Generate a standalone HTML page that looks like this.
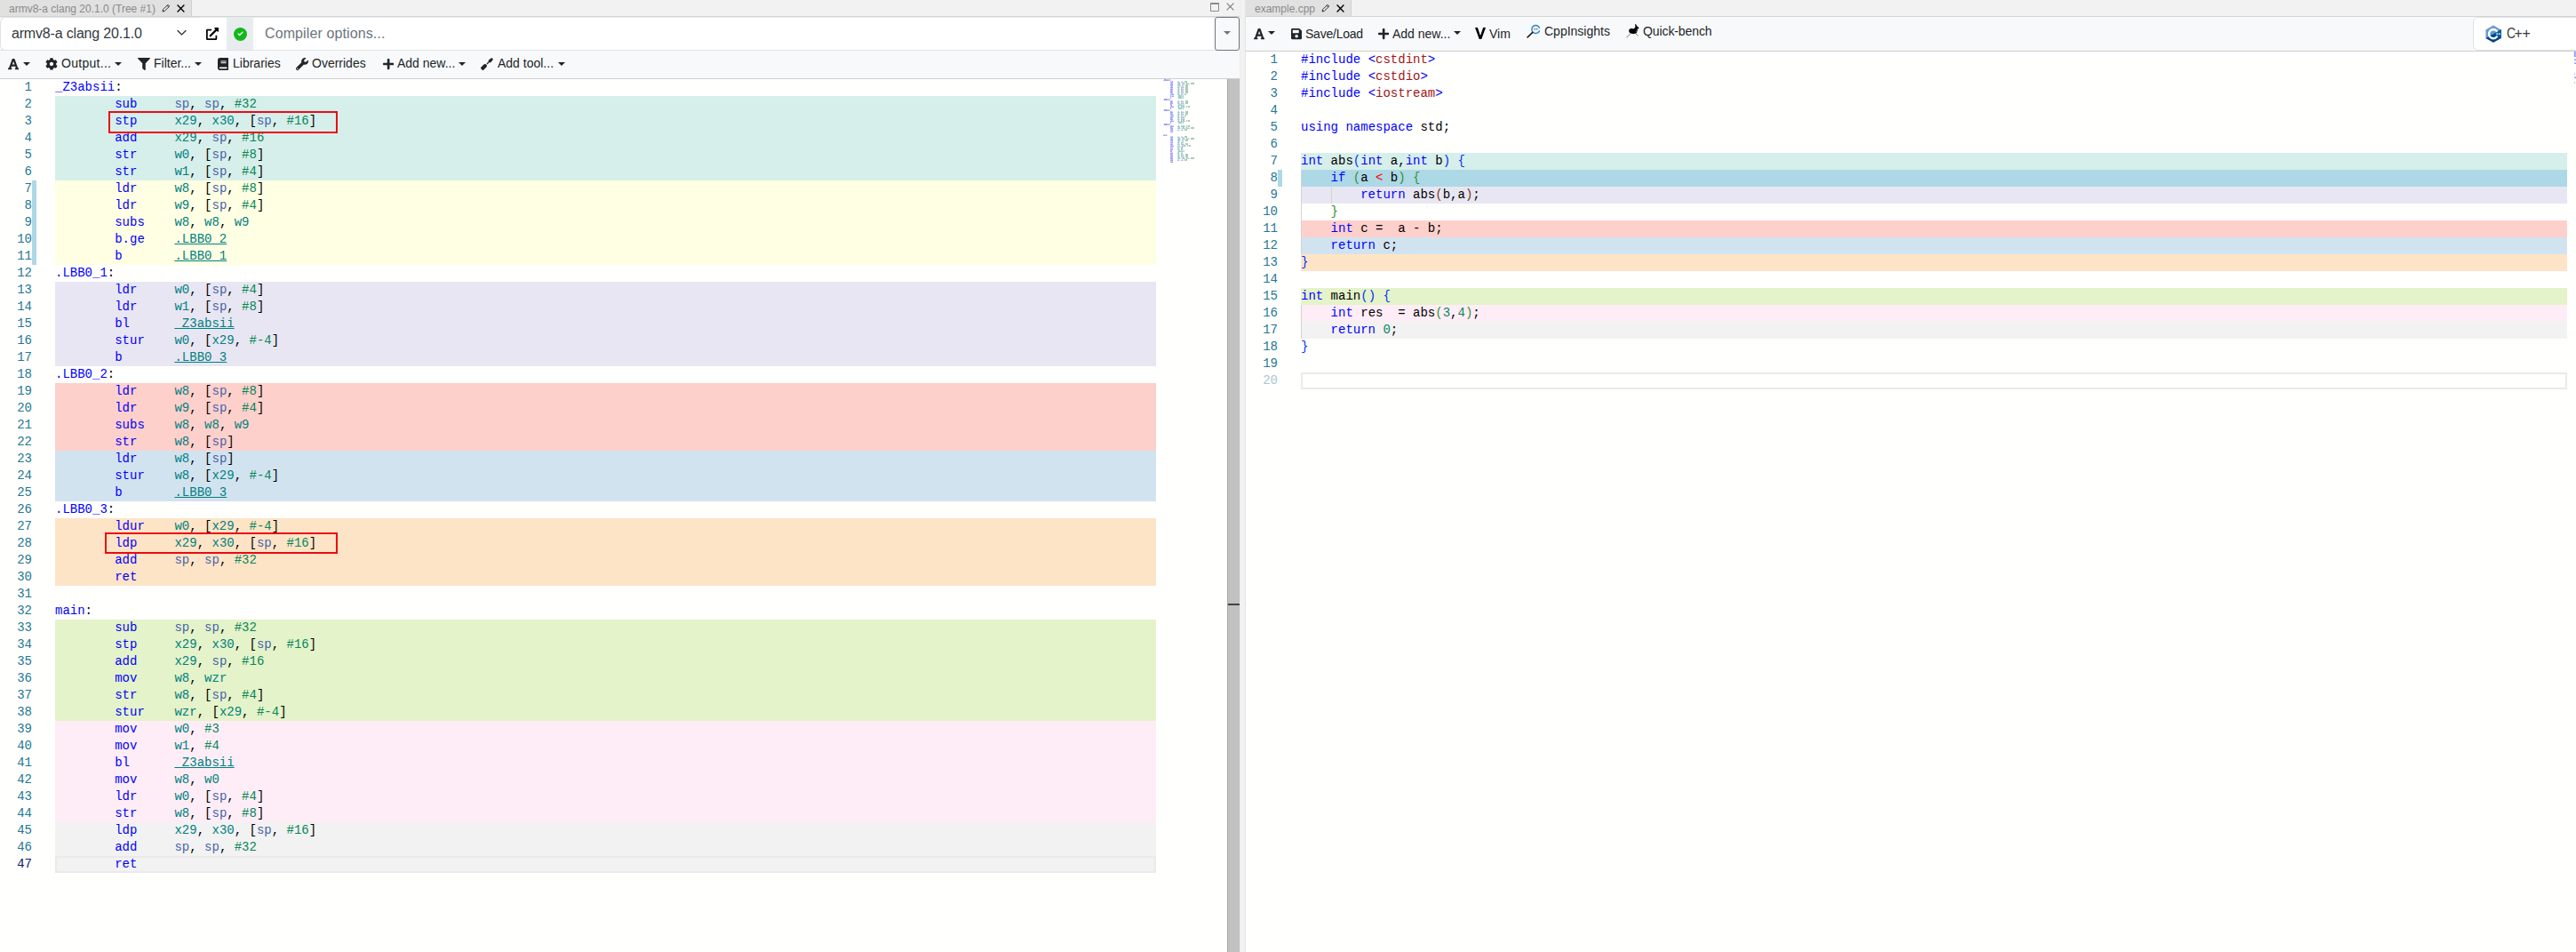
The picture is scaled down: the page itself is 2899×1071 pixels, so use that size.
<!DOCTYPE html>
<html><head><meta charset="utf-8"><title>Compiler Explorer</title>
<style>
*{box-sizing:border-box;margin:0;padding:0}
html,body{width:2899px;height:1071px;overflow:hidden;background:#fffffe}
body{position:relative;font-family:"Liberation Sans",sans-serif;color:#212529}
.abs{position:absolute}
.bg{position:absolute;height:19px}
.ln{position:absolute;height:19px;line-height:19px;font:14px/19px "Liberation Mono",monospace;color:#237893;text-align:right;white-space:pre}
.ln.act{color:#0b216f}
.ln.dim{color:#a7c8d3}
.cl{position:absolute;height:19px;font:14px/19px "Liberation Mono",monospace;color:#000;white-space:pre}
.k{color:#0000ff}.p{color:#000}.n{color:#098658}.v{color:#4864aa}.r{color:#008080}
.l{color:#008080;text-decoration:underline}
.s{color:#a31515}.b1{color:#0431fa}.b2{color:#319331}.b3{color:#7b3814}.red{color:#ff0000}
.cur{position:absolute;height:19px;border:2px solid #eaeaea}
.hdr{position:absolute;top:0;height:19px;background:#f2f2f2;border-bottom:1px solid #d4d4d4}
.tab{position:absolute;top:0;height:18px;background:#e1e1e1;border-right:1px solid #d0d0d0;font-size:12px;line-height:18px;color:#8a8a8a;white-space:nowrap}
.tb{position:absolute;background:#f8f9fa}
.t14{position:absolute;font-size:14px;line-height:20px;color:#212529;white-space:nowrap}
.caret{position:absolute;width:0;height:0;border-left:4px solid transparent;border-right:4px solid transparent;border-top:4px solid #212529}
svg{display:block}
</style></head><body>
<!-- ===== left pane chrome ===== -->
<div class="hdr" style="left:0;width:1395px"></div>
<div class="tab" style="left:0;width:216px"><span class="abs" style="left:10px;top:1px">armv8-a clang 20.1.0 (Tree #1)</span></div>
<!-- compiler row -->
<div class="abs" style="left:0;top:19px;width:1395px;height:38px;background:#fff;border-top:1px solid #e8ebee;border-bottom:1px solid #dee2e6"></div>
<div class="abs" style="left:0;top:19px;width:225px;height:38px;background:#fff;border:1px solid #dee2e6;border-right:0;border-radius:6px 0 0 6px"></div>
<div class="abs" style="left:13px;top:26px;font-size:16px;line-height:24px;color:#343a40;white-space:nowrap;letter-spacing:-0.18px">armv8-a clang 20.1.0</div>
<div class="abs" style="left:255px;top:20px;width:30px;height:36px;background:#e9ecef"></div>
<div class="abs" style="left:263px;top:30.5px;width:15px;height:15px;border-radius:50%;background:#12b81b"></div>
<div class="abs" style="left:298px;top:26px;font-size:16px;line-height:24px;color:#6c757d;white-space:nowrap;letter-spacing:0.11px">Compiler options...</div>
<div class="abs" style="left:1367px;top:19px;width:28px;height:38px;border:1px solid #6c757d;border-radius:3px;background:#f8f9fa"></div>
<div class="caret" style="left:1377px;top:35px;border-top-color:#6c757d"></div>
<!-- toolbar -->
<div class="tb" style="left:0;top:57px;width:1395px;height:32px;border-bottom:1px solid #cfcfcf"></div>
<div class="t14" style="left:69px;top:61px;letter-spacing:0.28px">Output...</div>
<div class="t14" style="left:173px;top:61px">Filter...</div>
<div class="t14" style="left:262px;top:61px">Libraries</div>
<div class="t14" style="left:351px;top:61px">Overrides</div>
<div class="t14" style="left:447px;top:61px">Add new...</div>
<div class="t14" style="left:560px;top:61px">Add tool...</div>
<!-- scrollbar -->
<div class="abs" style="left:1381px;top:89px;width:14px;height:982px;background:#c1c1c1;border-left:1px solid #a8a8a8"></div>
<div class="abs" style="left:1382px;top:679px;width:13px;height:2px;background:#424242"></div>
<!-- splitter -->
<div class="abs" style="left:1395px;top:0;width:7px;height:1071px;background:#f2f2f2;border-left:1px solid #ececec;border-right:1px solid #e4e4e4"></div>

<!-- ===== right pane chrome ===== -->
<div class="hdr" style="left:1402px;width:1497px"></div>
<div class="tab" style="left:1402px;width:119px"><span class="abs" style="left:10px;top:1px">example.cpp</span></div>
<div class="tb" style="left:1402px;top:19px;width:1497px;height:39px;border-bottom:1px solid #cfcfcf"></div>
<div class="t14" style="left:1469px;top:28px;letter-spacing:-0.23px">Save/Load</div>
<div class="t14" style="left:1567px;top:28px">Add new...</div>
<div class="t14" style="left:1676px;top:28px">Vim</div>
<div class="t14" style="left:1738px;top:25px">CppInsights</div>
<div class="t14" style="left:1849px;top:25px;letter-spacing:-0.1px">Quick-bench</div>
<div class="abs" style="left:2783px;top:19px;width:130px;height:38px;background:#fff;border:1px solid #dee2e6;border-radius:6px"></div>
<div class="abs" style="left:2820.6px;top:26px;font-size:16px;line-height:24px;color:#343a40;transform:scaleX(0.87);transform-origin:0 0">C</div><div class="abs" style="left:2829.4px;top:26px;font-size:16px;line-height:24px;color:#343a40;letter-spacing:-0.29px">++</div>
<div class="bg" style="left:62px;top:108px;width:1239px;background:#d7efea"></div>
<div class="bg" style="left:62px;top:127px;width:1239px;background:#d7efea"></div>
<div class="bg" style="left:62px;top:146px;width:1239px;background:#d7efea"></div>
<div class="bg" style="left:62px;top:165px;width:1239px;background:#d7efea"></div>
<div class="bg" style="left:62px;top:184px;width:1239px;background:#d7efea"></div>
<div class="bg" style="left:62px;top:203px;width:1239px;background:#ffffe3"></div>
<div class="bg" style="left:62px;top:222px;width:1239px;background:#ffffe3"></div>
<div class="bg" style="left:62px;top:241px;width:1239px;background:#ffffe3"></div>
<div class="bg" style="left:62px;top:260px;width:1239px;background:#ffffe3"></div>
<div class="bg" style="left:62px;top:279px;width:1239px;background:#ffffe3"></div>
<div class="bg" style="left:62px;top:317px;width:1239px;background:#e8e6f2"></div>
<div class="bg" style="left:62px;top:336px;width:1239px;background:#e8e6f2"></div>
<div class="bg" style="left:62px;top:355px;width:1239px;background:#e8e6f2"></div>
<div class="bg" style="left:62px;top:374px;width:1239px;background:#e8e6f2"></div>
<div class="bg" style="left:62px;top:393px;width:1239px;background:#e8e6f2"></div>
<div class="bg" style="left:62px;top:431px;width:1239px;background:#fed0cc"></div>
<div class="bg" style="left:62px;top:450px;width:1239px;background:#fed0cc"></div>
<div class="bg" style="left:62px;top:469px;width:1239px;background:#fed0cc"></div>
<div class="bg" style="left:62px;top:488px;width:1239px;background:#fed0cc"></div>
<div class="bg" style="left:62px;top:507px;width:1239px;background:#d2e3f0"></div>
<div class="bg" style="left:62px;top:526px;width:1239px;background:#d2e3f0"></div>
<div class="bg" style="left:62px;top:545px;width:1239px;background:#d2e3f0"></div>
<div class="bg" style="left:62px;top:583px;width:1239px;background:#fee4c7"></div>
<div class="bg" style="left:62px;top:602px;width:1239px;background:#fee4c7"></div>
<div class="bg" style="left:62px;top:621px;width:1239px;background:#fee4c7"></div>
<div class="bg" style="left:62px;top:640px;width:1239px;background:#fee4c7"></div>
<div class="bg" style="left:62px;top:697px;width:1239px;background:#e4f3c9"></div>
<div class="bg" style="left:62px;top:716px;width:1239px;background:#e4f3c9"></div>
<div class="bg" style="left:62px;top:735px;width:1239px;background:#e4f3c9"></div>
<div class="bg" style="left:62px;top:754px;width:1239px;background:#e4f3c9"></div>
<div class="bg" style="left:62px;top:773px;width:1239px;background:#e4f3c9"></div>
<div class="bg" style="left:62px;top:792px;width:1239px;background:#e4f3c9"></div>
<div class="bg" style="left:62px;top:811px;width:1239px;background:#feedf6"></div>
<div class="bg" style="left:62px;top:830px;width:1239px;background:#feedf6"></div>
<div class="bg" style="left:62px;top:849px;width:1239px;background:#feedf6"></div>
<div class="bg" style="left:62px;top:868px;width:1239px;background:#feedf6"></div>
<div class="bg" style="left:62px;top:887px;width:1239px;background:#feedf6"></div>
<div class="bg" style="left:62px;top:906px;width:1239px;background:#feedf6"></div>
<div class="bg" style="left:62px;top:925px;width:1239px;background:#f2f2f2"></div>
<div class="bg" style="left:62px;top:944px;width:1239px;background:#f2f2f2"></div>
<div class="bg" style="left:62px;top:963px;width:1239px;background:#f2f2f2"></div>
<div class="ln" style="left:0;width:36px;top:89px">1</div>
<div class="cl" style="left:62px;top:89px"><span class="k">_Z3absii</span><span class="p">:</span></div>
<div class="ln" style="left:0;width:36px;top:108px">2</div>
<div class="cl" style="left:62px;top:108px">        <span class="k">sub</span>     <span class="v">sp</span><span class="p">,</span> <span class="v">sp</span><span class="p">,</span> <span class="n">#32</span></div>
<div class="ln" style="left:0;width:36px;top:127px">3</div>
<div class="cl" style="left:62px;top:127px">        <span class="k">stp</span>     <span class="r">x29</span><span class="p">,</span> <span class="r">x30</span><span class="p">,</span> <span class="p">[</span><span class="v">sp</span><span class="p">,</span> <span class="n">#16</span><span class="p">]</span></div>
<div class="ln" style="left:0;width:36px;top:146px">4</div>
<div class="cl" style="left:62px;top:146px">        <span class="k">add</span>     <span class="r">x29</span><span class="p">,</span> <span class="v">sp</span><span class="p">,</span> <span class="n">#16</span></div>
<div class="ln" style="left:0;width:36px;top:165px">5</div>
<div class="cl" style="left:62px;top:165px">        <span class="k">str</span>     <span class="r">w0</span><span class="p">,</span> <span class="p">[</span><span class="v">sp</span><span class="p">,</span> <span class="n">#8</span><span class="p">]</span></div>
<div class="ln" style="left:0;width:36px;top:184px">6</div>
<div class="cl" style="left:62px;top:184px">        <span class="k">str</span>     <span class="r">w1</span><span class="p">,</span> <span class="p">[</span><span class="v">sp</span><span class="p">,</span> <span class="n">#4</span><span class="p">]</span></div>
<div class="ln" style="left:0;width:36px;top:203px">7</div>
<div class="cl" style="left:62px;top:203px">        <span class="k">ldr</span>     <span class="r">w8</span><span class="p">,</span> <span class="p">[</span><span class="v">sp</span><span class="p">,</span> <span class="n">#8</span><span class="p">]</span></div>
<div class="ln" style="left:0;width:36px;top:222px">8</div>
<div class="cl" style="left:62px;top:222px">        <span class="k">ldr</span>     <span class="r">w9</span><span class="p">,</span> <span class="p">[</span><span class="v">sp</span><span class="p">,</span> <span class="n">#4</span><span class="p">]</span></div>
<div class="ln" style="left:0;width:36px;top:241px">9</div>
<div class="cl" style="left:62px;top:241px">        <span class="k">subs</span>    <span class="r">w8</span><span class="p">,</span> <span class="r">w8</span><span class="p">,</span> <span class="r">w9</span></div>
<div class="ln" style="left:0;width:36px;top:260px">10</div>
<div class="cl" style="left:62px;top:260px">        <span class="k">b.ge</span>    <span class="l">.LBB0_2</span></div>
<div class="ln" style="left:0;width:36px;top:279px">11</div>
<div class="cl" style="left:62px;top:279px">        <span class="k">b</span>       <span class="l">.LBB0_1</span></div>
<div class="ln" style="left:0;width:36px;top:298px">12</div>
<div class="cl" style="left:62px;top:298px"><span class="k">.LBB0_1</span><span class="p">:</span></div>
<div class="ln" style="left:0;width:36px;top:317px">13</div>
<div class="cl" style="left:62px;top:317px">        <span class="k">ldr</span>     <span class="r">w0</span><span class="p">,</span> <span class="p">[</span><span class="v">sp</span><span class="p">,</span> <span class="n">#4</span><span class="p">]</span></div>
<div class="ln" style="left:0;width:36px;top:336px">14</div>
<div class="cl" style="left:62px;top:336px">        <span class="k">ldr</span>     <span class="r">w1</span><span class="p">,</span> <span class="p">[</span><span class="v">sp</span><span class="p">,</span> <span class="n">#8</span><span class="p">]</span></div>
<div class="ln" style="left:0;width:36px;top:355px">15</div>
<div class="cl" style="left:62px;top:355px">        <span class="k">bl</span>      <span class="l">_Z3absii</span></div>
<div class="ln" style="left:0;width:36px;top:374px">16</div>
<div class="cl" style="left:62px;top:374px">        <span class="k">stur</span>    <span class="r">w0</span><span class="p">,</span> <span class="p">[</span><span class="r">x29</span><span class="p">,</span> <span class="n">#-4</span><span class="p">]</span></div>
<div class="ln" style="left:0;width:36px;top:393px">17</div>
<div class="cl" style="left:62px;top:393px">        <span class="k">b</span>       <span class="l">.LBB0_3</span></div>
<div class="ln" style="left:0;width:36px;top:412px">18</div>
<div class="cl" style="left:62px;top:412px"><span class="k">.LBB0_2</span><span class="p">:</span></div>
<div class="ln" style="left:0;width:36px;top:431px">19</div>
<div class="cl" style="left:62px;top:431px">        <span class="k">ldr</span>     <span class="r">w8</span><span class="p">,</span> <span class="p">[</span><span class="v">sp</span><span class="p">,</span> <span class="n">#8</span><span class="p">]</span></div>
<div class="ln" style="left:0;width:36px;top:450px">20</div>
<div class="cl" style="left:62px;top:450px">        <span class="k">ldr</span>     <span class="r">w9</span><span class="p">,</span> <span class="p">[</span><span class="v">sp</span><span class="p">,</span> <span class="n">#4</span><span class="p">]</span></div>
<div class="ln" style="left:0;width:36px;top:469px">21</div>
<div class="cl" style="left:62px;top:469px">        <span class="k">subs</span>    <span class="r">w8</span><span class="p">,</span> <span class="r">w8</span><span class="p">,</span> <span class="r">w9</span></div>
<div class="ln" style="left:0;width:36px;top:488px">22</div>
<div class="cl" style="left:62px;top:488px">        <span class="k">str</span>     <span class="r">w8</span><span class="p">,</span> <span class="p">[</span><span class="v">sp</span><span class="p">]</span></div>
<div class="ln" style="left:0;width:36px;top:507px">23</div>
<div class="cl" style="left:62px;top:507px">        <span class="k">ldr</span>     <span class="r">w8</span><span class="p">,</span> <span class="p">[</span><span class="v">sp</span><span class="p">]</span></div>
<div class="ln" style="left:0;width:36px;top:526px">24</div>
<div class="cl" style="left:62px;top:526px">        <span class="k">stur</span>    <span class="r">w8</span><span class="p">,</span> <span class="p">[</span><span class="r">x29</span><span class="p">,</span> <span class="n">#-4</span><span class="p">]</span></div>
<div class="ln" style="left:0;width:36px;top:545px">25</div>
<div class="cl" style="left:62px;top:545px">        <span class="k">b</span>       <span class="l">.LBB0_3</span></div>
<div class="ln" style="left:0;width:36px;top:564px">26</div>
<div class="cl" style="left:62px;top:564px"><span class="k">.LBB0_3</span><span class="p">:</span></div>
<div class="ln" style="left:0;width:36px;top:583px">27</div>
<div class="cl" style="left:62px;top:583px">        <span class="k">ldur</span>    <span class="r">w0</span><span class="p">,</span> <span class="p">[</span><span class="r">x29</span><span class="p">,</span> <span class="n">#-4</span><span class="p">]</span></div>
<div class="ln" style="left:0;width:36px;top:602px">28</div>
<div class="cl" style="left:62px;top:602px">        <span class="k">ldp</span>     <span class="r">x29</span><span class="p">,</span> <span class="r">x30</span><span class="p">,</span> <span class="p">[</span><span class="v">sp</span><span class="p">,</span> <span class="n">#16</span><span class="p">]</span></div>
<div class="ln" style="left:0;width:36px;top:621px">29</div>
<div class="cl" style="left:62px;top:621px">        <span class="k">add</span>     <span class="v">sp</span><span class="p">,</span> <span class="v">sp</span><span class="p">,</span> <span class="n">#32</span></div>
<div class="ln" style="left:0;width:36px;top:640px">30</div>
<div class="cl" style="left:62px;top:640px">        <span class="k">ret</span></div>
<div class="ln" style="left:0;width:36px;top:659px">31</div>
<div class="ln" style="left:0;width:36px;top:678px">32</div>
<div class="cl" style="left:62px;top:678px"><span class="k">main</span><span class="p">:</span></div>
<div class="ln" style="left:0;width:36px;top:697px">33</div>
<div class="cl" style="left:62px;top:697px">        <span class="k">sub</span>     <span class="v">sp</span><span class="p">,</span> <span class="v">sp</span><span class="p">,</span> <span class="n">#32</span></div>
<div class="ln" style="left:0;width:36px;top:716px">34</div>
<div class="cl" style="left:62px;top:716px">        <span class="k">stp</span>     <span class="r">x29</span><span class="p">,</span> <span class="r">x30</span><span class="p">,</span> <span class="p">[</span><span class="v">sp</span><span class="p">,</span> <span class="n">#16</span><span class="p">]</span></div>
<div class="ln" style="left:0;width:36px;top:735px">35</div>
<div class="cl" style="left:62px;top:735px">        <span class="k">add</span>     <span class="r">x29</span><span class="p">,</span> <span class="v">sp</span><span class="p">,</span> <span class="n">#16</span></div>
<div class="ln" style="left:0;width:36px;top:754px">36</div>
<div class="cl" style="left:62px;top:754px">        <span class="k">mov</span>     <span class="r">w8</span><span class="p">,</span> <span class="r">wzr</span></div>
<div class="ln" style="left:0;width:36px;top:773px">37</div>
<div class="cl" style="left:62px;top:773px">        <span class="k">str</span>     <span class="r">w8</span><span class="p">,</span> <span class="p">[</span><span class="v">sp</span><span class="p">,</span> <span class="n">#4</span><span class="p">]</span></div>
<div class="ln" style="left:0;width:36px;top:792px">38</div>
<div class="cl" style="left:62px;top:792px">        <span class="k">stur</span>    <span class="r">wzr</span><span class="p">,</span> <span class="p">[</span><span class="r">x29</span><span class="p">,</span> <span class="n">#-4</span><span class="p">]</span></div>
<div class="ln" style="left:0;width:36px;top:811px">39</div>
<div class="cl" style="left:62px;top:811px">        <span class="k">mov</span>     <span class="r">w0</span><span class="p">,</span> <span class="n">#3</span></div>
<div class="ln" style="left:0;width:36px;top:830px">40</div>
<div class="cl" style="left:62px;top:830px">        <span class="k">mov</span>     <span class="r">w1</span><span class="p">,</span> <span class="n">#4</span></div>
<div class="ln" style="left:0;width:36px;top:849px">41</div>
<div class="cl" style="left:62px;top:849px">        <span class="k">bl</span>      <span class="l">_Z3absii</span></div>
<div class="ln" style="left:0;width:36px;top:868px">42</div>
<div class="cl" style="left:62px;top:868px">        <span class="k">mov</span>     <span class="r">w8</span><span class="p">,</span> <span class="r">w0</span></div>
<div class="ln" style="left:0;width:36px;top:887px">43</div>
<div class="cl" style="left:62px;top:887px">        <span class="k">ldr</span>     <span class="r">w0</span><span class="p">,</span> <span class="p">[</span><span class="v">sp</span><span class="p">,</span> <span class="n">#4</span><span class="p">]</span></div>
<div class="ln" style="left:0;width:36px;top:906px">44</div>
<div class="cl" style="left:62px;top:906px">        <span class="k">str</span>     <span class="r">w8</span><span class="p">,</span> <span class="p">[</span><span class="v">sp</span><span class="p">,</span> <span class="n">#8</span><span class="p">]</span></div>
<div class="ln" style="left:0;width:36px;top:925px">45</div>
<div class="cl" style="left:62px;top:925px">        <span class="k">ldp</span>     <span class="r">x29</span><span class="p">,</span> <span class="r">x30</span><span class="p">,</span> <span class="p">[</span><span class="v">sp</span><span class="p">,</span> <span class="n">#16</span><span class="p">]</span></div>
<div class="ln" style="left:0;width:36px;top:944px">46</div>
<div class="cl" style="left:62px;top:944px">        <span class="k">add</span>     <span class="v">sp</span><span class="p">,</span> <span class="v">sp</span><span class="p">,</span> <span class="n">#32</span></div>
<div class="ln act" style="left:0;width:36px;top:963px">47</div>
<div class="cl" style="left:62px;top:963px">        <span class="k">ret</span></div>
<div class="cur" style="left:62px;top:963px;width:1239px"></div>
<div style="position:absolute;left:36px;top:203px;width:5px;height:95px;background:#add8e6"></div>
<div class="bg" style="left:1464px;top:172px;width:1425px;background:#d7efea"></div>
<div class="bg" style="left:1464px;top:191px;width:1425px;background:#add8e6"></div>
<div class="bg" style="left:1464px;top:210px;width:1425px;background:#e8e6f2"></div>
<div class="bg" style="left:1464px;top:248px;width:1425px;background:#fed0cc"></div>
<div class="bg" style="left:1464px;top:267px;width:1425px;background:#d2e3f0"></div>
<div class="bg" style="left:1464px;top:286px;width:1425px;background:#fee4c7"></div>
<div class="bg" style="left:1464px;top:324px;width:1425px;background:#e4f3c9"></div>
<div class="bg" style="left:1464px;top:343px;width:1425px;background:#feedf6"></div>
<div class="bg" style="left:1464px;top:362px;width:1425px;background:#f2f2f2"></div>
<div style="position:absolute;left:1464.0px;top:191px;width:1px;height:95px;background:#d3d3d3"></div>
<div style="position:absolute;left:1497.6px;top:210px;width:1px;height:19px;background:#d3d3d3"></div>
<div style="position:absolute;left:1464.0px;top:343px;width:1px;height:38px;background:#d3d3d3"></div>
<div class="ln" style="left:1402px;width:36px;top:58px">1</div>
<div class="cl" style="left:1464px;top:58px"><span class="k">#include </span><span class="k">&lt;</span><span class="s">cstdint</span><span class="k">&gt;</span></div>
<div class="ln" style="left:1402px;width:36px;top:77px">2</div>
<div class="cl" style="left:1464px;top:77px"><span class="k">#include </span><span class="k">&lt;</span><span class="s">cstdio</span><span class="k">&gt;</span></div>
<div class="ln" style="left:1402px;width:36px;top:96px">3</div>
<div class="cl" style="left:1464px;top:96px"><span class="k">#include </span><span class="k">&lt;</span><span class="s">iostream</span><span class="k">&gt;</span></div>
<div class="ln" style="left:1402px;width:36px;top:115px">4</div>
<div class="ln" style="left:1402px;width:36px;top:134px">5</div>
<div class="cl" style="left:1464px;top:134px"><span class="k">using</span> <span class="k">namespace</span><span class="p"> std;</span></div>
<div class="ln" style="left:1402px;width:36px;top:153px">6</div>
<div class="ln" style="left:1402px;width:36px;top:172px">7</div>
<div class="cl" style="left:1464px;top:172px"><span class="k">int</span><span class="p"> abs</span><span class="b1">(</span><span class="k">int</span><span class="p"> a,</span><span class="k">int</span><span class="p"> b</span><span class="b1">)</span> <span class="b1">{</span></div>
<div class="ln" style="left:1402px;width:36px;top:191px">8</div>
<div class="cl" style="left:1464px;top:191px">    <span class="k">if</span> <span class="b2">(</span><span class="p">a </span><span class="red">&lt;</span><span class="p"> b</span><span class="b2">)</span> <span class="b2">{</span></div>
<div class="ln" style="left:1402px;width:36px;top:210px">9</div>
<div class="cl" style="left:1464px;top:210px">        <span class="k">return</span><span class="p"> abs</span><span class="b3">(</span><span class="p">b,a</span><span class="b3">)</span><span class="p">;</span></div>
<div class="ln" style="left:1402px;width:36px;top:229px">10</div>
<div class="cl" style="left:1464px;top:229px">    <span class="b2">}</span></div>
<div class="ln" style="left:1402px;width:36px;top:248px">11</div>
<div class="cl" style="left:1464px;top:248px">    <span class="k">int</span><span class="p"> c =  a - b;</span></div>
<div class="ln" style="left:1402px;width:36px;top:267px">12</div>
<div class="cl" style="left:1464px;top:267px">    <span class="k">return</span><span class="p"> c;</span></div>
<div class="ln" style="left:1402px;width:36px;top:286px">13</div>
<div class="cl" style="left:1464px;top:286px"><span class="b1">}</span></div>
<div class="ln" style="left:1402px;width:36px;top:305px">14</div>
<div class="ln" style="left:1402px;width:36px;top:324px">15</div>
<div class="cl" style="left:1464px;top:324px"><span class="k">int</span><span class="p"> main</span><span class="b1">()</span> <span class="b1">{</span></div>
<div class="ln" style="left:1402px;width:36px;top:343px">16</div>
<div class="cl" style="left:1464px;top:343px">    <span class="k">int</span><span class="p"> res  = abs</span><span class="b2">(</span><span class="n">3</span><span class="p">,</span><span class="n">4</span><span class="b2">)</span><span class="p">;</span></div>
<div class="ln" style="left:1402px;width:36px;top:362px">17</div>
<div class="cl" style="left:1464px;top:362px">    <span class="k">return</span> <span class="n">0</span><span class="p">;</span></div>
<div class="ln" style="left:1402px;width:36px;top:381px">18</div>
<div class="cl" style="left:1464px;top:381px"><span class="b1">}</span></div>
<div class="ln" style="left:1402px;width:36px;top:400px">19</div>
<div class="ln dim" style="left:1402px;width:36px;top:419px">20</div>
<div class="cur" style="left:1464px;top:419px;width:1425px"></div>
<div style="position:absolute;left:1438px;top:191px;width:5px;height:19px;background:#add8e6"></div>
<svg style="position:absolute;left:1309px;top:89px" width="60" height="96" shape-rendering="crispEdges"><path fill="#0000ff" fill-opacity="0.22" d="M0 1h1v1h-1zM6 0h1v1h-1zM7 0h1v1h-1zM5 23h1v1h-1zM5 35h1v1h-1zM5 51h1v1h-1zM2 62h1v1h-1z"/><path fill="#0000ff" fill-opacity="0.38" d="M1 0h1v1h-1zM1 1h1v1h-1zM2 0h1v1h-1zM2 1h1v1h-1zM3 1h1v1h-1zM4 1h1v1h-1zM5 1h1v1h-1zM8 3h1v1h-1zM9 3h1v1h-1zM10 3h1v1h-1zM8 5h1v1h-1zM9 5h1v1h-1zM8 7h1v1h-1zM9 7h1v1h-1zM10 7h1v1h-1zM8 9h1v1h-1zM9 9h1v1h-1zM10 9h1v1h-1zM8 11h1v1h-1zM9 11h1v1h-1zM10 11h1v1h-1zM8 13h1v1h-1zM9 13h1v1h-1zM10 13h1v1h-1zM8 15h1v1h-1zM9 15h1v1h-1zM10 15h1v1h-1zM8 17h1v1h-1zM9 17h1v1h-1zM10 17h1v1h-1zM11 17h1v1h-1zM8 19h1v1h-1zM11 19h1v1h-1zM8 21h1v1h-1zM1 22h1v1h-1zM1 23h1v1h-1zM2 22h1v1h-1zM2 23h1v1h-1zM3 22h1v1h-1zM3 23h1v1h-1zM4 22h1v1h-1zM4 23h1v1h-1zM6 22h1v1h-1zM6 23h1v1h-1zM8 25h1v1h-1zM9 25h1v1h-1zM10 25h1v1h-1zM8 27h1v1h-1zM9 27h1v1h-1zM10 27h1v1h-1zM8 29h1v1h-1zM9 29h1v1h-1zM8 31h1v1h-1zM9 31h1v1h-1zM10 31h1v1h-1zM11 31h1v1h-1zM8 33h1v1h-1zM1 34h1v1h-1zM1 35h1v1h-1zM2 34h1v1h-1zM2 35h1v1h-1zM3 34h1v1h-1zM3 35h1v1h-1zM4 34h1v1h-1zM4 35h1v1h-1zM6 34h1v1h-1zM6 35h1v1h-1zM8 37h1v1h-1zM9 37h1v1h-1zM10 37h1v1h-1zM8 39h1v1h-1zM9 39h1v1h-1zM10 39h1v1h-1zM8 41h1v1h-1zM9 41h1v1h-1zM10 41h1v1h-1zM11 41h1v1h-1zM8 43h1v1h-1zM9 43h1v1h-1zM10 43h1v1h-1zM8 45h1v1h-1zM9 45h1v1h-1zM10 45h1v1h-1zM8 47h1v1h-1zM9 47h1v1h-1zM10 47h1v1h-1zM11 47h1v1h-1zM8 49h1v1h-1zM1 50h1v1h-1zM1 51h1v1h-1zM2 50h1v1h-1zM2 51h1v1h-1zM3 50h1v1h-1zM3 51h1v1h-1zM4 50h1v1h-1zM4 51h1v1h-1zM6 50h1v1h-1zM6 51h1v1h-1zM8 53h1v1h-1zM9 53h1v1h-1zM10 53h1v1h-1zM11 53h1v1h-1zM8 55h1v1h-1zM9 55h1v1h-1zM8 57h1v1h-1zM9 57h1v1h-1zM10 57h1v1h-1zM8 59h1v1h-1zM9 59h1v1h-1zM10 59h1v1h-1zM0 63h1v1h-1zM1 63h1v1h-1zM3 63h1v1h-1zM8 65h1v1h-1zM9 65h1v1h-1zM10 65h1v1h-1zM8 67h1v1h-1zM9 67h1v1h-1zM8 69h1v1h-1zM9 69h1v1h-1zM10 69h1v1h-1zM8 71h1v1h-1zM9 71h1v1h-1zM10 71h1v1h-1zM8 73h1v1h-1zM9 73h1v1h-1zM10 73h1v1h-1zM8 75h1v1h-1zM9 75h1v1h-1zM10 75h1v1h-1zM11 75h1v1h-1zM8 77h1v1h-1zM9 77h1v1h-1zM10 77h1v1h-1zM8 79h1v1h-1zM9 79h1v1h-1zM10 79h1v1h-1zM8 81h1v1h-1zM9 81h1v1h-1zM8 83h1v1h-1zM9 83h1v1h-1zM10 83h1v1h-1zM8 85h1v1h-1zM9 85h1v1h-1zM10 85h1v1h-1zM8 87h1v1h-1zM9 87h1v1h-1zM10 87h1v1h-1zM8 89h1v1h-1zM9 89h1v1h-1zM8 91h1v1h-1zM9 91h1v1h-1zM10 91h1v1h-1zM8 93h1v1h-1zM9 93h1v1h-1zM10 93h1v1h-1z"/><path fill="#0000ff" fill-opacity="0.14" d="M3 0h1v1h-1zM5 0h1v1h-1zM8 2h1v1h-1zM9 2h1v1h-1zM8 4h1v1h-1zM8 6h1v1h-1zM8 8h1v1h-1zM10 8h1v1h-1zM8 10h1v1h-1zM10 10h1v1h-1zM10 12h1v1h-1zM10 14h1v1h-1zM8 16h1v1h-1zM9 16h1v1h-1zM11 16h1v1h-1zM9 19h1v1h-1zM11 18h1v1h-1zM0 23h1v1h-1zM10 24h1v1h-1zM10 26h1v1h-1zM8 30h1v1h-1zM10 30h1v1h-1zM11 30h1v1h-1zM0 35h1v1h-1zM10 36h1v1h-1zM10 38h1v1h-1zM8 40h1v1h-1zM9 40h1v1h-1zM11 40h1v1h-1zM8 42h1v1h-1zM10 42h1v1h-1zM10 44h1v1h-1zM8 46h1v1h-1zM10 46h1v1h-1zM11 46h1v1h-1zM0 51h1v1h-1zM10 52h1v1h-1zM11 52h1v1h-1zM8 56h1v1h-1zM8 58h1v1h-1zM9 58h1v1h-1zM0 62h1v1h-1zM1 62h1v1h-1zM3 62h1v1h-1zM8 64h1v1h-1zM9 64h1v1h-1zM8 66h1v1h-1zM8 68h1v1h-1zM8 70h1v1h-1zM9 70h1v1h-1zM10 70h1v1h-1zM8 72h1v1h-1zM10 72h1v1h-1zM8 74h1v1h-1zM10 74h1v1h-1zM11 74h1v1h-1zM8 76h1v1h-1zM9 76h1v1h-1zM10 76h1v1h-1zM8 78h1v1h-1zM9 78h1v1h-1zM10 78h1v1h-1zM8 82h1v1h-1zM9 82h1v1h-1zM10 82h1v1h-1zM10 84h1v1h-1zM8 86h1v1h-1zM10 86h1v1h-1zM8 90h1v1h-1zM8 92h1v1h-1zM9 92h1v1h-1z"/><path fill="#0000ff" fill-opacity="0.3" d="M4 0h1v1h-1zM10 2h1v1h-1zM9 4h1v1h-1zM9 6h1v1h-1zM10 6h1v1h-1zM9 8h1v1h-1zM9 10h1v1h-1zM8 12h1v1h-1zM9 12h1v1h-1zM8 14h1v1h-1zM9 14h1v1h-1zM10 16h1v1h-1zM8 18h1v1h-1zM8 20h1v1h-1zM8 24h1v1h-1zM9 24h1v1h-1zM8 26h1v1h-1zM9 26h1v1h-1zM8 28h1v1h-1zM9 28h1v1h-1zM9 30h1v1h-1zM8 32h1v1h-1zM8 36h1v1h-1zM9 36h1v1h-1zM8 38h1v1h-1zM9 38h1v1h-1zM10 40h1v1h-1zM9 42h1v1h-1zM8 44h1v1h-1zM9 44h1v1h-1zM9 46h1v1h-1zM8 48h1v1h-1zM8 52h1v1h-1zM9 52h1v1h-1zM8 54h1v1h-1zM9 54h1v1h-1zM9 56h1v1h-1zM10 56h1v1h-1zM10 58h1v1h-1zM10 64h1v1h-1zM9 66h1v1h-1zM9 68h1v1h-1zM10 68h1v1h-1zM9 72h1v1h-1zM9 74h1v1h-1zM8 80h1v1h-1zM9 80h1v1h-1zM8 84h1v1h-1zM9 84h1v1h-1zM9 86h1v1h-1zM8 88h1v1h-1zM9 88h1v1h-1zM9 90h1v1h-1zM10 90h1v1h-1zM10 92h1v1h-1z"/><path fill="#0000ff" fill-opacity="0.26" d="M6 1h1v1h-1zM7 1h1v1h-1zM2 63h1v1h-1z"/><path fill="#000000" fill-opacity="0.09" d="M8 0h1v1h-1zM7 22h1v1h-1zM7 34h1v1h-1zM7 50h1v1h-1zM4 62h1v1h-1z"/><path fill="#000000" fill-opacity="0.14" d="M8 1h1v1h-1zM7 23h1v1h-1zM7 35h1v1h-1zM7 51h1v1h-1zM4 63h1v1h-1z"/><path fill="#4864aa" fill-opacity="0.14" d="M16 2h1v1h-1zM20 2h1v1h-1zM27 4h1v1h-1zM21 6h1v1h-1zM21 8h1v1h-1zM21 10h1v1h-1zM21 12h1v1h-1zM21 14h1v1h-1zM21 24h1v1h-1zM21 26h1v1h-1zM21 36h1v1h-1zM21 38h1v1h-1zM21 42h1v1h-1zM21 44h1v1h-1zM27 54h1v1h-1zM16 56h1v1h-1zM20 56h1v1h-1zM16 64h1v1h-1zM20 64h1v1h-1zM27 66h1v1h-1zM21 68h1v1h-1zM21 72h1v1h-1zM21 84h1v1h-1zM21 86h1v1h-1zM27 88h1v1h-1zM16 90h1v1h-1zM20 90h1v1h-1z"/><path fill="#4864aa" fill-opacity="0.38" d="M16 3h1v1h-1zM20 3h1v1h-1zM27 5h1v1h-1zM21 7h1v1h-1zM21 9h1v1h-1zM21 11h1v1h-1zM21 13h1v1h-1zM21 15h1v1h-1zM21 25h1v1h-1zM21 27h1v1h-1zM21 37h1v1h-1zM21 39h1v1h-1zM21 43h1v1h-1zM21 45h1v1h-1zM27 55h1v1h-1zM16 57h1v1h-1zM20 57h1v1h-1zM16 65h1v1h-1zM20 65h1v1h-1zM27 67h1v1h-1zM21 69h1v1h-1zM21 73h1v1h-1zM21 85h1v1h-1zM21 87h1v1h-1zM27 89h1v1h-1zM16 91h1v1h-1zM20 91h1v1h-1z"/><path fill="#4864aa" fill-opacity="0.19" d="M17 2h1v1h-1zM21 2h1v1h-1zM28 4h1v1h-1zM22 6h1v1h-1zM22 8h1v1h-1zM22 10h1v1h-1zM22 12h1v1h-1zM22 14h1v1h-1zM22 24h1v1h-1zM22 26h1v1h-1zM22 36h1v1h-1zM22 38h1v1h-1zM22 42h1v1h-1zM22 44h1v1h-1zM28 54h1v1h-1zM17 56h1v1h-1zM21 56h1v1h-1zM17 64h1v1h-1zM21 64h1v1h-1zM28 66h1v1h-1zM22 68h1v1h-1zM22 72h1v1h-1zM22 84h1v1h-1zM22 86h1v1h-1zM28 88h1v1h-1zM17 90h1v1h-1zM21 90h1v1h-1z"/><path fill="#4864aa" fill-opacity="0.41" d="M17 3h1v1h-1zM21 3h1v1h-1zM28 5h1v1h-1zM22 7h1v1h-1zM22 9h1v1h-1zM22 11h1v1h-1zM22 13h1v1h-1zM22 15h1v1h-1zM22 25h1v1h-1zM22 27h1v1h-1zM22 37h1v1h-1zM22 39h1v1h-1zM22 43h1v1h-1zM22 45h1v1h-1zM28 55h1v1h-1zM17 57h1v1h-1zM21 57h1v1h-1zM17 65h1v1h-1zM21 65h1v1h-1zM28 67h1v1h-1zM22 69h1v1h-1zM22 73h1v1h-1zM22 85h1v1h-1zM22 87h1v1h-1zM28 89h1v1h-1zM17 91h1v1h-1zM21 91h1v1h-1z"/><path fill="#000000" fill-opacity="0.17" d="M18 3h1v1h-1zM22 3h1v1h-1zM19 5h1v1h-1zM24 5h1v1h-1zM29 5h1v1h-1zM19 7h1v1h-1zM23 7h1v1h-1zM18 9h1v1h-1zM23 9h1v1h-1zM18 11h1v1h-1zM23 11h1v1h-1zM18 13h1v1h-1zM23 13h1v1h-1zM18 15h1v1h-1zM23 15h1v1h-1zM18 17h1v1h-1zM22 17h1v1h-1zM18 25h1v1h-1zM23 25h1v1h-1zM18 27h1v1h-1zM23 27h1v1h-1zM18 31h1v1h-1zM24 31h1v1h-1zM18 37h1v1h-1zM23 37h1v1h-1zM18 39h1v1h-1zM23 39h1v1h-1zM18 41h1v1h-1zM22 41h1v1h-1zM18 43h1v1h-1zM18 45h1v1h-1zM18 47h1v1h-1zM24 47h1v1h-1zM18 53h1v1h-1zM24 53h1v1h-1zM19 55h1v1h-1zM24 55h1v1h-1zM29 55h1v1h-1zM18 57h1v1h-1zM22 57h1v1h-1zM18 65h1v1h-1zM22 65h1v1h-1zM19 67h1v1h-1zM24 67h1v1h-1zM29 67h1v1h-1zM19 69h1v1h-1zM23 69h1v1h-1zM18 71h1v1h-1zM18 73h1v1h-1zM23 73h1v1h-1zM19 75h1v1h-1zM25 75h1v1h-1zM18 77h1v1h-1zM18 79h1v1h-1zM18 83h1v1h-1zM18 85h1v1h-1zM23 85h1v1h-1zM18 87h1v1h-1zM23 87h1v1h-1zM19 89h1v1h-1zM24 89h1v1h-1zM29 89h1v1h-1zM18 91h1v1h-1zM22 91h1v1h-1z"/><path fill="#098658" fill-opacity="0.38" d="M24 2h1v1h-1zM24 3h1v1h-1zM25 2h1v1h-1zM25 3h1v1h-1zM26 2h1v1h-1zM26 3h1v1h-1zM31 4h1v1h-1zM31 5h1v1h-1zM32 4h1v1h-1zM32 5h1v1h-1zM33 4h1v1h-1zM33 5h1v1h-1zM25 6h1v1h-1zM25 7h1v1h-1zM26 6h1v1h-1zM26 7h1v1h-1zM27 6h1v1h-1zM27 7h1v1h-1zM25 8h1v1h-1zM25 9h1v1h-1zM26 8h1v1h-1zM26 9h1v1h-1zM25 10h1v1h-1zM25 11h1v1h-1zM26 10h1v1h-1zM26 11h1v1h-1zM25 12h1v1h-1zM25 13h1v1h-1zM26 12h1v1h-1zM26 13h1v1h-1zM25 14h1v1h-1zM25 15h1v1h-1zM26 14h1v1h-1zM26 15h1v1h-1zM25 24h1v1h-1zM25 25h1v1h-1zM26 24h1v1h-1zM26 25h1v1h-1zM25 26h1v1h-1zM25 27h1v1h-1zM26 26h1v1h-1zM26 27h1v1h-1zM26 30h1v1h-1zM26 31h1v1h-1zM28 30h1v1h-1zM28 31h1v1h-1zM25 36h1v1h-1zM25 37h1v1h-1zM26 36h1v1h-1zM26 37h1v1h-1zM25 38h1v1h-1zM25 39h1v1h-1zM26 38h1v1h-1zM26 39h1v1h-1zM26 46h1v1h-1zM26 47h1v1h-1zM28 46h1v1h-1zM28 47h1v1h-1zM26 52h1v1h-1zM26 53h1v1h-1zM28 52h1v1h-1zM28 53h1v1h-1zM31 54h1v1h-1zM31 55h1v1h-1zM32 54h1v1h-1zM32 55h1v1h-1zM33 54h1v1h-1zM33 55h1v1h-1zM24 56h1v1h-1zM24 57h1v1h-1zM25 56h1v1h-1zM25 57h1v1h-1zM26 56h1v1h-1zM26 57h1v1h-1zM24 64h1v1h-1zM24 65h1v1h-1zM25 64h1v1h-1zM25 65h1v1h-1zM26 64h1v1h-1zM26 65h1v1h-1zM31 66h1v1h-1zM31 67h1v1h-1zM32 66h1v1h-1zM32 67h1v1h-1zM33 66h1v1h-1zM33 67h1v1h-1zM25 68h1v1h-1zM25 69h1v1h-1zM26 68h1v1h-1zM26 69h1v1h-1zM27 68h1v1h-1zM27 69h1v1h-1zM25 72h1v1h-1zM25 73h1v1h-1zM26 72h1v1h-1zM26 73h1v1h-1zM27 74h1v1h-1zM27 75h1v1h-1zM29 74h1v1h-1zM29 75h1v1h-1zM20 76h1v1h-1zM20 77h1v1h-1zM21 76h1v1h-1zM21 77h1v1h-1zM20 78h1v1h-1zM20 79h1v1h-1zM21 78h1v1h-1zM21 79h1v1h-1zM25 84h1v1h-1zM25 85h1v1h-1zM26 84h1v1h-1zM26 85h1v1h-1zM25 86h1v1h-1zM25 87h1v1h-1zM26 86h1v1h-1zM26 87h1v1h-1zM31 88h1v1h-1zM31 89h1v1h-1zM32 88h1v1h-1zM32 89h1v1h-1zM33 88h1v1h-1zM33 89h1v1h-1zM24 90h1v1h-1zM24 91h1v1h-1zM25 90h1v1h-1zM25 91h1v1h-1zM26 90h1v1h-1zM26 91h1v1h-1z"/><path fill="#0000ff" fill-opacity="0.19" d="M10 4h1v1h-1zM10 18h1v1h-1zM10 54h1v1h-1zM10 66h1v1h-1zM10 88h1v1h-1z"/><path fill="#0000ff" fill-opacity="0.41" d="M10 5h1v1h-1zM10 19h1v1h-1zM10 55h1v1h-1zM10 67h1v1h-1zM10 89h1v1h-1z"/><path fill="#008080" fill-opacity="0.14" d="M16 4h1v1h-1zM21 4h1v1h-1zM16 6h1v1h-1zM16 8h1v1h-1zM16 10h1v1h-1zM16 12h1v1h-1zM16 14h1v1h-1zM16 16h1v1h-1zM20 16h1v1h-1zM24 16h1v1h-1zM16 19h1v1h-1zM16 21h1v1h-1zM16 24h1v1h-1zM16 26h1v1h-1zM19 28h1v1h-1zM21 28h1v1h-1zM16 30h1v1h-1zM21 30h1v1h-1zM16 33h1v1h-1zM16 36h1v1h-1zM16 38h1v1h-1zM16 40h1v1h-1zM20 40h1v1h-1zM24 40h1v1h-1zM16 42h1v1h-1zM16 44h1v1h-1zM16 46h1v1h-1zM21 46h1v1h-1zM16 49h1v1h-1zM16 52h1v1h-1zM21 52h1v1h-1zM16 54h1v1h-1zM21 54h1v1h-1zM16 66h1v1h-1zM21 66h1v1h-1zM16 68h1v1h-1zM16 70h1v1h-1zM20 70h1v1h-1zM21 70h1v1h-1zM22 70h1v1h-1zM16 72h1v1h-1zM16 74h1v1h-1zM17 74h1v1h-1zM18 74h1v1h-1zM22 74h1v1h-1zM16 76h1v1h-1zM16 78h1v1h-1zM19 80h1v1h-1zM21 80h1v1h-1zM16 82h1v1h-1zM20 82h1v1h-1zM16 84h1v1h-1zM16 86h1v1h-1zM16 88h1v1h-1zM21 88h1v1h-1z"/><path fill="#008080" fill-opacity="0.38" d="M16 5h1v1h-1zM17 4h1v1h-1zM17 5h1v1h-1zM18 4h1v1h-1zM18 5h1v1h-1zM21 5h1v1h-1zM22 4h1v1h-1zM22 5h1v1h-1zM23 4h1v1h-1zM23 5h1v1h-1zM16 7h1v1h-1zM17 6h1v1h-1zM17 7h1v1h-1zM18 6h1v1h-1zM18 7h1v1h-1zM16 9h1v1h-1zM17 8h1v1h-1zM17 9h1v1h-1zM16 11h1v1h-1zM17 10h1v1h-1zM17 11h1v1h-1zM16 13h1v1h-1zM17 12h1v1h-1zM17 13h1v1h-1zM16 15h1v1h-1zM17 14h1v1h-1zM17 15h1v1h-1zM16 17h1v1h-1zM17 16h1v1h-1zM17 17h1v1h-1zM20 17h1v1h-1zM21 16h1v1h-1zM21 17h1v1h-1zM24 17h1v1h-1zM25 16h1v1h-1zM25 17h1v1h-1zM17 18h1v1h-1zM17 19h1v1h-1zM18 18h1v1h-1zM18 19h1v1h-1zM19 18h1v1h-1zM19 19h1v1h-1zM20 18h1v1h-1zM20 19h1v1h-1zM22 18h1v1h-1zM22 19h1v1h-1zM17 20h1v1h-1zM17 21h1v1h-1zM18 20h1v1h-1zM18 21h1v1h-1zM19 20h1v1h-1zM19 21h1v1h-1zM20 20h1v1h-1zM20 21h1v1h-1zM22 20h1v1h-1zM22 21h1v1h-1zM16 25h1v1h-1zM17 24h1v1h-1zM17 25h1v1h-1zM16 27h1v1h-1zM17 26h1v1h-1zM17 27h1v1h-1zM17 28h1v1h-1zM17 29h1v1h-1zM18 28h1v1h-1zM18 29h1v1h-1zM19 29h1v1h-1zM20 29h1v1h-1zM21 29h1v1h-1zM16 31h1v1h-1zM17 30h1v1h-1zM17 31h1v1h-1zM21 31h1v1h-1zM22 30h1v1h-1zM22 31h1v1h-1zM23 30h1v1h-1zM23 31h1v1h-1zM17 32h1v1h-1zM17 33h1v1h-1zM18 32h1v1h-1zM18 33h1v1h-1zM19 32h1v1h-1zM19 33h1v1h-1zM20 32h1v1h-1zM20 33h1v1h-1zM22 32h1v1h-1zM22 33h1v1h-1zM16 37h1v1h-1zM17 36h1v1h-1zM17 37h1v1h-1zM16 39h1v1h-1zM17 38h1v1h-1zM17 39h1v1h-1zM16 41h1v1h-1zM17 40h1v1h-1zM17 41h1v1h-1zM20 41h1v1h-1zM21 40h1v1h-1zM21 41h1v1h-1zM24 41h1v1h-1zM25 40h1v1h-1zM25 41h1v1h-1zM16 43h1v1h-1zM17 42h1v1h-1zM17 43h1v1h-1zM16 45h1v1h-1zM17 44h1v1h-1zM17 45h1v1h-1zM16 47h1v1h-1zM17 46h1v1h-1zM17 47h1v1h-1zM21 47h1v1h-1zM22 46h1v1h-1zM22 47h1v1h-1zM23 46h1v1h-1zM23 47h1v1h-1zM17 48h1v1h-1zM17 49h1v1h-1zM18 48h1v1h-1zM18 49h1v1h-1zM19 48h1v1h-1zM19 49h1v1h-1zM20 48h1v1h-1zM20 49h1v1h-1zM22 48h1v1h-1zM22 49h1v1h-1zM16 53h1v1h-1zM17 52h1v1h-1zM17 53h1v1h-1zM21 53h1v1h-1zM22 52h1v1h-1zM22 53h1v1h-1zM23 52h1v1h-1zM23 53h1v1h-1zM16 55h1v1h-1zM17 54h1v1h-1zM17 55h1v1h-1zM18 54h1v1h-1zM18 55h1v1h-1zM21 55h1v1h-1zM22 54h1v1h-1zM22 55h1v1h-1zM23 54h1v1h-1zM23 55h1v1h-1zM16 67h1v1h-1zM17 66h1v1h-1zM17 67h1v1h-1zM18 66h1v1h-1zM18 67h1v1h-1zM21 67h1v1h-1zM22 66h1v1h-1zM22 67h1v1h-1zM23 66h1v1h-1zM23 67h1v1h-1zM16 69h1v1h-1zM17 68h1v1h-1zM17 69h1v1h-1zM18 68h1v1h-1zM18 69h1v1h-1zM16 71h1v1h-1zM17 70h1v1h-1zM17 71h1v1h-1zM20 71h1v1h-1zM21 71h1v1h-1zM22 71h1v1h-1zM16 73h1v1h-1zM17 72h1v1h-1zM17 73h1v1h-1zM16 75h1v1h-1zM17 75h1v1h-1zM18 75h1v1h-1zM22 75h1v1h-1zM23 74h1v1h-1zM23 75h1v1h-1zM24 74h1v1h-1zM24 75h1v1h-1zM16 77h1v1h-1zM17 76h1v1h-1zM17 77h1v1h-1zM16 79h1v1h-1zM17 78h1v1h-1zM17 79h1v1h-1zM17 80h1v1h-1zM17 81h1v1h-1zM18 80h1v1h-1zM18 81h1v1h-1zM19 81h1v1h-1zM20 81h1v1h-1zM21 81h1v1h-1zM16 83h1v1h-1zM17 82h1v1h-1zM17 83h1v1h-1zM20 83h1v1h-1zM21 82h1v1h-1zM21 83h1v1h-1zM16 85h1v1h-1zM17 84h1v1h-1zM17 85h1v1h-1zM16 87h1v1h-1zM17 86h1v1h-1zM17 87h1v1h-1zM16 89h1v1h-1zM17 88h1v1h-1zM17 89h1v1h-1zM18 88h1v1h-1zM18 89h1v1h-1zM21 89h1v1h-1zM22 88h1v1h-1zM22 89h1v1h-1zM23 88h1v1h-1zM23 89h1v1h-1z"/><path fill="#000000" fill-opacity="0.26" d="M26 4h1v1h-1zM26 5h1v1h-1zM34 4h1v1h-1zM34 5h1v1h-1zM20 8h1v1h-1zM20 9h1v1h-1zM27 8h1v1h-1zM27 9h1v1h-1zM20 10h1v1h-1zM20 11h1v1h-1zM27 10h1v1h-1zM27 11h1v1h-1zM20 12h1v1h-1zM20 13h1v1h-1zM27 12h1v1h-1zM27 13h1v1h-1zM20 14h1v1h-1zM20 15h1v1h-1zM27 14h1v1h-1zM27 15h1v1h-1zM20 24h1v1h-1zM20 25h1v1h-1zM27 24h1v1h-1zM27 25h1v1h-1zM20 26h1v1h-1zM20 27h1v1h-1zM27 26h1v1h-1zM27 27h1v1h-1zM20 30h1v1h-1zM20 31h1v1h-1zM29 30h1v1h-1zM29 31h1v1h-1zM20 36h1v1h-1zM20 37h1v1h-1zM27 36h1v1h-1zM27 37h1v1h-1zM20 38h1v1h-1zM20 39h1v1h-1zM27 38h1v1h-1zM27 39h1v1h-1zM20 42h1v1h-1zM20 43h1v1h-1zM23 42h1v1h-1zM23 43h1v1h-1zM20 44h1v1h-1zM20 45h1v1h-1zM23 44h1v1h-1zM23 45h1v1h-1zM20 46h1v1h-1zM20 47h1v1h-1zM29 46h1v1h-1zM29 47h1v1h-1zM20 52h1v1h-1zM20 53h1v1h-1zM29 52h1v1h-1zM29 53h1v1h-1zM26 54h1v1h-1zM26 55h1v1h-1zM34 54h1v1h-1zM34 55h1v1h-1zM26 66h1v1h-1zM26 67h1v1h-1zM34 66h1v1h-1zM34 67h1v1h-1zM20 72h1v1h-1zM20 73h1v1h-1zM27 72h1v1h-1zM27 73h1v1h-1zM21 74h1v1h-1zM21 75h1v1h-1zM30 74h1v1h-1zM30 75h1v1h-1zM20 84h1v1h-1zM20 85h1v1h-1zM27 84h1v1h-1zM27 85h1v1h-1zM20 86h1v1h-1zM20 87h1v1h-1zM27 86h1v1h-1zM27 87h1v1h-1zM26 88h1v1h-1zM26 89h1v1h-1zM34 88h1v1h-1zM34 89h1v1h-1z"/><path fill="#008080" fill-opacity="0.22" d="M21 19h1v1h-1zM21 21h1v1h-1zM16 29h1v1h-1zM22 28h1v1h-1zM23 28h1v1h-1zM21 33h1v1h-1zM21 49h1v1h-1zM16 81h1v1h-1zM22 80h1v1h-1zM23 80h1v1h-1z"/><path fill="#008080" fill-opacity="0.3" d="M20 28h1v1h-1zM20 80h1v1h-1z"/><path fill="#008080" fill-opacity="0.26" d="M22 29h1v1h-1zM23 29h1v1h-1zM22 81h1v1h-1zM23 81h1v1h-1z"/><path fill="#098658" fill-opacity="0.09" d="M27 30h1v1h-1zM27 31h1v1h-1zM27 46h1v1h-1zM27 47h1v1h-1zM27 52h1v1h-1zM27 53h1v1h-1zM28 74h1v1h-1zM28 75h1v1h-1z"/></svg>
<svg style="position:absolute;left:2897px;top:58px" width="2" height="40" shape-rendering="crispEdges"><path fill="#0000ff" fill-opacity="0.45" d="M0 0h1v1h-1zM0 1h1v1h-1zM2 1h1v1h-1zM3 1h1v1h-1zM4 1h1v1h-1zM5 1h1v1h-1zM6 1h1v1h-1zM7 1h1v1h-1zM0 2h1v1h-1zM0 3h1v1h-1zM2 3h1v1h-1zM3 3h1v1h-1zM4 3h1v1h-1zM5 3h1v1h-1zM6 3h1v1h-1zM7 3h1v1h-1zM0 4h1v1h-1zM0 5h1v1h-1zM2 5h1v1h-1zM3 5h1v1h-1zM4 5h1v1h-1zM5 5h1v1h-1zM6 5h1v1h-1zM7 5h1v1h-1zM0 9h1v1h-1zM1 9h1v1h-1zM3 9h1v1h-1zM6 9h1v1h-1zM7 9h1v1h-1zM8 9h1v1h-1zM9 9h1v1h-1zM10 9h1v1h-1zM12 9h1v1h-1zM13 9h1v1h-1zM14 9h1v1h-1zM1 13h1v1h-1zM2 13h1v1h-1zM9 13h1v1h-1zM10 13h1v1h-1zM15 13h1v1h-1zM16 13h1v1h-1zM8 17h1v1h-1zM9 17h1v1h-1zM10 17h1v1h-1zM11 17h1v1h-1zM12 17h1v1h-1zM13 17h1v1h-1zM5 21h1v1h-1zM6 21h1v1h-1zM4 23h1v1h-1zM5 23h1v1h-1zM6 23h1v1h-1zM7 23h1v1h-1zM8 23h1v1h-1zM9 23h1v1h-1zM1 29h1v1h-1zM2 29h1v1h-1zM5 31h1v1h-1zM6 31h1v1h-1zM4 33h1v1h-1zM5 33h1v1h-1zM6 33h1v1h-1zM7 33h1v1h-1zM8 33h1v1h-1zM9 33h1v1h-1z"/><path fill="#0000ff" fill-opacity="0.27" d="M1 0h1v1h-1zM9 0h1v1h-1zM9 1h1v1h-1zM17 0h1v1h-1zM17 1h1v1h-1zM1 2h1v1h-1zM9 2h1v1h-1zM9 3h1v1h-1zM16 2h1v1h-1zM16 3h1v1h-1zM1 4h1v1h-1zM9 4h1v1h-1zM9 5h1v1h-1zM18 4h1v1h-1zM18 5h1v1h-1zM2 8h1v1h-1zM0 12h1v1h-1zM8 12h1v1h-1zM14 12h1v1h-1zM4 14h1v1h-1zM5 14h1v1h-1zM5 15h1v1h-1zM4 20h1v1h-1zM0 28h1v1h-1zM4 30h1v1h-1z"/><path fill="#0000ff" fill-opacity="0.32" d="M1 1h1v1h-1zM1 3h1v1h-1zM1 5h1v1h-1zM2 9h1v1h-1zM0 13h1v1h-1zM8 13h1v1h-1zM14 13h1v1h-1zM4 15h1v1h-1zM4 21h1v1h-1zM0 29h1v1h-1zM4 31h1v1h-1z"/><path fill="#0000ff" fill-opacity="0.16" d="M2 0h1v1h-1zM3 0h1v1h-1zM5 0h1v1h-1zM7 0h1v1h-1zM2 2h1v1h-1zM3 2h1v1h-1zM5 2h1v1h-1zM7 2h1v1h-1zM2 4h1v1h-1zM3 4h1v1h-1zM5 4h1v1h-1zM7 4h1v1h-1zM0 8h1v1h-1zM1 8h1v1h-1zM3 8h1v1h-1zM6 8h1v1h-1zM7 8h1v1h-1zM8 8h1v1h-1zM9 8h1v1h-1zM10 8h1v1h-1zM12 8h1v1h-1zM13 8h1v1h-1zM14 8h1v1h-1zM1 12h1v1h-1zM9 12h1v1h-1zM15 12h1v1h-1zM8 16h1v1h-1zM9 16h1v1h-1zM11 16h1v1h-1zM12 16h1v1h-1zM13 16h1v1h-1zM5 20h1v1h-1zM4 22h1v1h-1zM5 22h1v1h-1zM7 22h1v1h-1zM8 22h1v1h-1zM9 22h1v1h-1zM1 28h1v1h-1zM5 30h1v1h-1zM4 32h1v1h-1zM5 32h1v1h-1zM7 32h1v1h-1zM8 32h1v1h-1zM9 32h1v1h-1z"/><path fill="#0000ff" fill-opacity="0.36" d="M4 0h1v1h-1zM6 0h1v1h-1zM4 2h1v1h-1zM6 2h1v1h-1zM4 4h1v1h-1zM6 4h1v1h-1zM2 12h1v1h-1zM10 12h1v1h-1zM16 12h1v1h-1zM10 16h1v1h-1zM6 20h1v1h-1zM6 22h1v1h-1zM2 28h1v1h-1zM6 30h1v1h-1zM6 32h1v1h-1z"/><path fill="#a31515" fill-opacity="0.16" d="M10 0h1v1h-1zM11 0h1v1h-1zM15 0h1v1h-1zM10 2h1v1h-1zM11 2h1v1h-1zM15 2h1v1h-1zM11 4h1v1h-1zM12 4h1v1h-1zM14 4h1v1h-1zM15 4h1v1h-1zM16 4h1v1h-1zM17 4h1v1h-1z"/><path fill="#a31515" fill-opacity="0.45" d="M10 1h1v1h-1zM11 1h1v1h-1zM12 1h1v1h-1zM13 1h1v1h-1zM15 1h1v1h-1zM16 1h1v1h-1zM10 3h1v1h-1zM11 3h1v1h-1zM12 3h1v1h-1zM13 3h1v1h-1zM15 3h1v1h-1zM11 5h1v1h-1zM12 5h1v1h-1zM13 5h1v1h-1zM14 5h1v1h-1zM15 5h1v1h-1zM16 5h1v1h-1zM17 5h1v1h-1z"/><path fill="#a31515" fill-opacity="0.36" d="M12 0h1v1h-1zM13 0h1v1h-1zM16 0h1v1h-1zM12 2h1v1h-1zM13 2h1v1h-1zM13 4h1v1h-1z"/><path fill="#a31515" fill-opacity="0.27" d="M14 0h1v1h-1zM14 2h1v1h-1zM10 4h1v1h-1z"/><path fill="#a31515" fill-opacity="0.32" d="M14 1h1v1h-1zM14 3h1v1h-1zM10 5h1v1h-1z"/><path fill="#0000ff" fill-opacity="0.23" d="M4 8h1v1h-1zM11 8h1v1h-1z"/><path fill="#0000ff" fill-opacity="0.5" d="M4 9h1v1h-1zM11 9h1v1h-1z"/><path fill="#000000" fill-opacity="0.16" d="M16 8h1v1h-1zM4 12h1v1h-1zM6 12h1v1h-1zM12 12h1v1h-1zM8 14h1v1h-1zM15 16h1v1h-1zM17 16h1v1h-1zM21 16h1v1h-1zM8 20h1v1h-1zM13 20h1v1h-1zM11 22h1v1h-1zM4 28h1v1h-1zM5 28h1v1h-1zM7 28h1v1h-1zM8 30h1v1h-1zM9 30h1v1h-1zM10 30h1v1h-1zM15 30h1v1h-1zM17 30h1v1h-1z"/><path fill="#000000" fill-opacity="0.45" d="M16 9h1v1h-1zM17 9h1v1h-1zM18 9h1v1h-1zM4 13h1v1h-1zM5 13h1v1h-1zM6 13h1v1h-1zM12 13h1v1h-1zM18 13h1v1h-1zM8 15h1v1h-1zM12 15h1v1h-1zM15 17h1v1h-1zM16 17h1v1h-1zM17 17h1v1h-1zM19 17h1v1h-1zM21 17h1v1h-1zM8 21h1v1h-1zM13 21h1v1h-1zM17 21h1v1h-1zM11 23h1v1h-1zM4 29h1v1h-1zM5 29h1v1h-1zM7 29h1v1h-1zM8 31h1v1h-1zM9 31h1v1h-1zM10 31h1v1h-1zM15 31h1v1h-1zM16 31h1v1h-1zM17 31h1v1h-1z"/><path fill="#000000" fill-opacity="0.36" d="M17 8h1v1h-1zM18 8h1v1h-1zM5 12h1v1h-1zM18 12h1v1h-1zM12 14h1v1h-1zM16 16h1v1h-1zM19 16h1v1h-1zM17 20h1v1h-1zM16 30h1v1h-1z"/><path fill="#000000" fill-opacity="0.27" d="M19 8h1v1h-1zM19 9h1v1h-1zM23 16h1v1h-1zM23 17h1v1h-1zM10 20h1v1h-1zM10 21h1v1h-1zM18 20h1v1h-1zM18 21h1v1h-1zM12 22h1v1h-1zM12 23h1v1h-1zM6 28h1v1h-1zM13 30h1v1h-1zM13 31h1v1h-1zM23 30h1v1h-1zM23 31h1v1h-1zM12 32h1v1h-1zM12 33h1v1h-1z"/><path fill="#0431fa" fill-opacity="0.27" d="M7 12h1v1h-1zM7 13h1v1h-1zM19 12h1v1h-1zM19 13h1v1h-1zM21 12h1v1h-1zM21 13h1v1h-1zM0 24h1v1h-1zM0 25h1v1h-1zM8 28h1v1h-1zM8 29h1v1h-1zM9 28h1v1h-1zM9 29h1v1h-1zM11 28h1v1h-1zM11 29h1v1h-1zM0 34h1v1h-1zM0 35h1v1h-1z"/><path fill="#000000" fill-opacity="0.2" d="M13 13h1v1h-1zM20 17h1v1h-1zM20 31h1v1h-1z"/><path fill="#319331" fill-opacity="0.27" d="M7 14h1v1h-1zM7 15h1v1h-1zM13 14h1v1h-1zM13 15h1v1h-1zM15 14h1v1h-1zM15 15h1v1h-1zM4 18h1v1h-1zM4 19h1v1h-1zM18 30h1v1h-1zM18 31h1v1h-1zM22 30h1v1h-1zM22 31h1v1h-1z"/><path fill="#ff0000" fill-opacity="0.27" d="M10 14h1v1h-1zM10 15h1v1h-1z"/><path fill="#7b3814" fill-opacity="0.27" d="M18 16h1v1h-1zM18 17h1v1h-1zM22 16h1v1h-1zM22 17h1v1h-1z"/><path fill="#000000" fill-opacity="0.11" d="M15 20h1v1h-1zM15 21h1v1h-1z"/><path fill="#000000" fill-opacity="0.32" d="M6 29h1v1h-1z"/><path fill="#098658" fill-opacity="0.45" d="M19 30h1v1h-1zM19 31h1v1h-1zM21 30h1v1h-1zM21 31h1v1h-1zM11 32h1v1h-1zM11 33h1v1h-1z"/></svg>
<div style="position:absolute;left:122px;top:125px;width:258px;height:25px;border:2px solid #ee0812"></div>
<div style="position:absolute;left:118px;top:599px;width:262px;height:24px;border:2px solid #ee0812"></div><svg class="abs" style="left:182px;top:4px" width="10" height="10" viewBox="0 0 10 10"><path d="M1 9 L1.6 6.6 L7 1.2 L8.8 3 L3.4 8.4 Z M6 2.2 L7.8 4" fill="none" stroke="#333" stroke-width="0.95" stroke-linejoin="round"/><path d="M1 9 L1.5 6.9 L3.1 8.5 Z" fill="#333"/></svg>
<svg class="abs" style="left:199px;top:5px" width="9" height="9" viewBox="0 0 9 9"><path d="M0.6 0.6 L8.4 8.4 M8.4 0.6 L0.6 8.4" stroke="#000" stroke-width="1.35" fill="none"/></svg>
<svg class="abs" style="left:1362px;top:3px" width="10" height="10" viewBox="0 0 10 10"><path d="M0.5 0.5H9.5V9.5H0.5Z" fill="none" stroke="#8c8c8c" stroke-width="1"/><path d="M0 1H10" stroke="#8c8c8c" stroke-width="2"/></svg>
<svg class="abs" style="left:1380px;top:3px" width="9" height="9" viewBox="0 0 9 9"><path d="M0.6 0.6 L8.4 8.4 M8.4 0.6 L0.6 8.4" stroke="#7d7d7d" stroke-width="1.15" fill="none"/></svg>
<svg class="abs" style="left:199px;top:33px" width="11" height="8" viewBox="0 0 11 8"><path d="M1 1.5 L5.5 6 L10 1.5" fill="none" stroke="#343a40" stroke-width="1.4" stroke-linecap="round" stroke-linejoin="round"/></svg>
<svg class="abs" style="left:232px;top:30.5px" width="14.00" height="14" viewBox="0 0 512 512"><path fill="#000" d="M432 320H400a16 16 0 0 0-16 16V448H64V128H208a16 16 0 0 0 16-16V80a16 16 0 0 0-16-16H48A48 48 0 0 0 0 112V464a48 48 0 0 0 48 48H400a48 48 0 0 0 48-48V336A16 16 0 0 0 432 320ZM488 0h-128c-21.370 0-32.050 25.910-17 41l35.730 35.730L135 320.370a24 24 0 0 0 0 34L157.670 377a24 24 0 0 0 34 0L435.280 133.320 471 169c15 15 41 4.500 41-17V24A24 24 0 0 0 488 0Z"/></svg>
<svg class="abs" style="left:266.2px;top:34.3px" width="9" height="8" viewBox="0 0 9 8"><path d="M2 3.9 L3.7 5.5 L7 2.2" fill="none" stroke="#fff" stroke-width="1.3" stroke-linecap="round" stroke-linejoin="round"/></svg>
<svg class="abs" style="left:8.7px;top:65px" width="12.25" height="14" viewBox="0 0 448 512"><path fill="#212529" d="M432 416h-23.410L277.880 53.690A32 32 0 0 0 247.580 32h-47.160a32 32 0 0 0-30.300 21.690L39.410 416H16a16 16 0 0 0-16 16v32a16 16 0 0 0 16 16h128a16 16 0 0 0 16-16v-32a16 16 0 0 0-16-16h-19.580l23.300-64h152.560l23.300 64H304a16 16 0 0 0-16 16v32a16 16 0 0 0 16 16h128a16 16 0 0 0 16-16v-32a16 16 0 0 0-16-16zM176.850 272L224 142.510 271.150 272z"/></svg>
<div class="caret" style="left:25.5px;top:70px;border-top-color:#212529"></div>
<svg class="abs" style="left:51px;top:65px" width="14.00" height="14" viewBox="0 0 512 512"><path fill="#212529" d="M487.4 315.7l-42.600-24.600c4.300-23.200 4.300-47 0-70.200l42.600-24.600c4.900-2.800 7.100-8.600 5.500-14-11.100-35.600-30-67.800-54.700-94.600-3.800-4.100-10-5.100-14.800-2.300L380.800 110c-17.900-15.400-38.500-27.300-60.800-35.100V25.800c0-5.600-3.900-10.500-9.400-11.700-36.700-8.200-74.300-7.800-109.200 0-5.500 1.200-9.400 6.100-9.400 11.700V75c-22.200 7.900-42.800 19.800-60.800 35.100L88.700 85.500c-4.900-2.800-11-1.900-14.800 2.300-24.700 26.700-43.600 58.900-54.700 94.600-1.700 5.400.6 11.200 5.500 14L67.300 221c-4.300 23.200-4.300 47 0 70.200l-42.600 24.600c-4.900 2.800-7.100 8.600-5.500 14 11.100 35.600 30 67.800 54.700 94.600 3.800 4.100 10 5.100 14.800 2.300l42.600-24.600c17.900 15.400 38.500 27.300 60.800 35.100v49.200c0 5.600 3.900 10.500 9.400 11.700 36.700 8.200 74.300 7.800 109.200 0 5.500-1.200 9.400-6.100 9.400-11.700v-49.200c22.200-7.900 42.800-19.800 60.800-35.100l42.600 24.600c4.900 2.800 11 1.900 14.800-2.300 24.700-26.700 43.600-58.900 54.700-94.600 1.500-5.500-.7-11.300-5.600-14.100zM256 336c-44.100 0-80-35.900-80-80s35.900-80 80-80 80 35.900 80 80-35.900 80-80 80z"/></svg>
<div class="caret" style="left:129px;top:70px;border-top-color:#212529"></div>
<svg class="abs" style="left:155px;top:65px" width="14.00" height="14" viewBox="0 0 512 512"><path fill="#212529" d="M487.976 0H24.028C2.710 0-8.047 25.866 7.058 40.971L192 225.941V432c0 7.831 3.821 15.170 10.237 19.662l80 55.980C298.020 518.690 320 507.493 320 487.980V225.941l184.947-184.970C520.021 25.896 509.338 0 487.976 0z"/></svg>
<div class="caret" style="left:219px;top:70px;border-top-color:#212529"></div>
<svg class="abs" style="left:245px;top:65px" width="12.25" height="14" viewBox="0 0 448 512"><path fill="#212529" d="M448 360V24c0-13.300-10.700-24-24-24H96C43 0 0 43 0 96v320c0 53 43 96 96 96h328c13.300 0 24-10.700 24-24v-16c0-7.500-3.500-14.300-8.900-18.700-4.200-15.400-4.200-59.300 0-74.700 5.400-4.300 8.900-11.100 8.900-18.600zM128 134c0-3.300 2.700-6 6-6h212c3.300 0 6 2.700 6 6v20c0 3.300-2.700 6-6 6H134c-3.300 0-6-2.700-6-6v-20zm0 64c0-3.300 2.700-6 6-6h212c3.300 0 6 2.700 6 6v20c0 3.300-2.700 6-6 6H134c-3.300 0-6-2.700-6-6v-20zm253.400 250H96c-17.700 0-32-14.300-32-32 0-17.600 14.400-32 32-32h285.400c-1.900 17.100-1.900 46.900 0 64z"/></svg>
<svg class="abs" style="left:333px;top:65px" width="14.00" height="14" viewBox="0 0 512 512"><path fill="#212529" d="M507.730 109.100c-2.240-9.030-13.540-12.090-20.120-5.510l-74.360 74.360-67.880-11.310-11.310-67.880 74.360-74.360c6.620-6.620 3.430-17.900-5.660-20.160-47.380-11.740-99.550.910-136.580 37.930-39.640 39.640-50.550 97.100-34.050 147.200L18.740 402.760c-24.990 24.990-24.990 65.510 0 90.500 24.990 24.990 65.510 24.990 90.500 0l213.210-213.210c50.120 16.710 107.470 5.680 147.370-34.220 37.070-37.070 49.700-89.320 37.910-136.730zM64 472c-13.250 0-24-10.750-24-24 0-13.260 10.750-24 24-24s24 10.740 24 24c0 13.250-10.750 24-24 24z"/></svg>
<svg class="abs" style="left:431px;top:65px" width="12.25" height="14" viewBox="0 0 448 512"><path fill="#212529" d="M416 208H272V64c0-17.670-14.330-32-32-32h-32c-17.670 0-32 14.330-32 32v144H32c-17.670 0-32 14.330-32 32v32c0 17.670 14.330 32 32 32h144v144c0 17.670 14.330 32 32 32h32c17.670 0 32-14.330 32-32V304h144c17.670 0 32-14.330 32-32v-32c0-17.670-14.330-32-32-32z"/></svg>
<div class="caret" style="left:516px;top:70px;border-top-color:#212529"></div>
<svg class="abs" style="left:541px;top:65px" width="14.00" height="14" viewBox="0 0 512 512"><path fill="#212529" d="M448 0L320 96v62.060l-83.030 83.030c6.790 4.250 13.270 9.060 19.070 14.870 5.800 5.800 10.620 12.280 14.870 19.070L353.940 192H416l96-128-64-64zM128 278.590L10.920 395.670c-14.550 14.550-14.550 38.150 0 52.710l52.700 52.700c14.560 14.560 38.150 14.560 52.710 0L233.410 384c29.110-29.110 29.110-76.300 0-105.410s-76.300-29.110-105.410 0z"/></svg>
<div class="caret" style="left:628px;top:70px;border-top-color:#212529"></div>
<svg class="abs" style="left:1487px;top:4px" width="10" height="10" viewBox="0 0 10 10"><path d="M1 9 L1.6 6.6 L7 1.2 L8.8 3 L3.4 8.4 Z M6 2.2 L7.8 4" fill="none" stroke="#333" stroke-width="0.95" stroke-linejoin="round"/><path d="M1 9 L1.5 6.9 L3.1 8.5 Z" fill="#333"/></svg>
<svg class="abs" style="left:1504px;top:5px" width="9" height="9" viewBox="0 0 9 9"><path d="M0.6 0.6 L8.4 8.4 M8.4 0.6 L0.6 8.4" stroke="#000" stroke-width="1.35" fill="none"/></svg>
<svg class="abs" style="left:1411px;top:30.5px" width="12.25" height="14" viewBox="0 0 448 512"><path fill="#212529" d="M432 416h-23.410L277.880 53.690A32 32 0 0 0 247.580 32h-47.160a32 32 0 0 0-30.300 21.690L39.410 416H16a16 16 0 0 0-16 16v32a16 16 0 0 0 16 16h128a16 16 0 0 0 16-16v-32a16 16 0 0 0-16-16h-19.580l23.300-64h152.560l23.300 64H304a16 16 0 0 0-16 16v32a16 16 0 0 0 16 16h128a16 16 0 0 0 16-16v-32a16 16 0 0 0-16-16zM176.850 272L224 142.510 271.150 272z"/></svg>
<div class="caret" style="left:1427px;top:35px;border-top-color:#212529"></div>
<svg class="abs" style="left:1452.5px;top:30.5px" width="12.25" height="14" viewBox="0 0 448 512"><path fill="#212529" d="M433.941 129.941l-83.882-83.882A48 48 0 0 0 316.118 32H48C21.490 32 0 53.490 0 80v352c0 26.510 21.490 48 48 48h352c26.510 0 48-21.490 48-48V163.882a48 48 0 0 0-14.059-33.941zM224 416c-35.346 0-64-28.654-64-64 0-35.346 28.654-64 64-64s64 28.654 64 64c0 35.346-28.654 64-64 64zm96-304.520V212c0 6.627-5.373 12-12 12H76c-6.627 0-12-5.373-12-12V108c0-6.627 5.373-12 12-12h228.520c3.183 0 6.235 1.264 8.485 3.515l3.480 3.480A11.996 11.996 0 0 1 320 111.480z"/></svg>
<svg class="abs" style="left:1551px;top:30.5px" width="12.25" height="14" viewBox="0 0 448 512"><path fill="#212529" d="M416 208H272V64c0-17.670-14.330-32-32-32h-32c-17.670 0-32 14.330-32 32v144H32c-17.670 0-32 14.330-32 32v32c0 17.670 14.330 32 32 32h144v144c0 17.670 14.330 32 32 32h32c17.670 0 32-14.330 32-32V304h144c17.670 0 32-14.330 32-32v-32c0-17.670-14.330-32-32-32z"/></svg>
<div class="caret" style="left:1636px;top:35px;border-top-color:#212529"></div>
<svg class="abs" style="left:1660px;top:31px" width="12" height="13" viewBox="0 0 12 13"><path d="M0 0 H2.9 L6 9.2 L9.1 0 H12 L7.3 13 H4.7 Z" fill="#000"/></svg>
<svg class="abs" style="left:1717px;top:26px" width="18" height="18" viewBox="0 0 18 18"><circle cx="11.4" cy="6.9" r="4.3" fill="#f3f6fa"/><path d="M15.5 5.4 A4.5 4.5 0 1 0 15.4 8.9" fill="none" stroke="#1f86d1" stroke-width="1.4" stroke-linecap="round"/><path d="M7.8 10.4 L2.0 16.0" stroke="#111" stroke-width="1.5" stroke-linecap="round"/><path d="M9.4 6.8H13.4M9.9 5.6V8.0M12.9 5.6V8.0" stroke="#666" stroke-width="0.6"/></svg>
<svg class="abs" style="left:1829px;top:26px" width="17" height="18" viewBox="0 0 17 18"><path d="M4.2 7.4 C6 5.6 8.2 5.6 9.6 6.4 L11.4 4.6 L11.1 1.4 L12.0 1.0 L13.2 3.6 C14.8 4.2 15.6 5.6 15.2 6.4 L13.4 6.6 C14.4 8.6 13.8 10.6 12.0 11.6 L9.2 12.2 L6.2 11.6 C4.6 10.8 3.8 9.0 4.2 7.4 Z" fill="#050505"/><path d="M12.4 8.8 L14.4 10.4" stroke="#f8f9fa" stroke-width="0.8"/><path d="M6.0 11.6 L1.4 16.4" stroke="#333" stroke-width="0.9" stroke-dasharray="1.6 0.7"/><path d="M11.6 11.6 L14.6 14.4" stroke="#333" stroke-width="0.9" stroke-dasharray="1.6 0.7"/></svg>
<svg class="abs" style="left:2797px;top:27.7px" width="18" height="20.3" viewBox="0 0 19 21" preserveAspectRatio="none"><path d="M9.5 0.5 L18.5 5.6 V15.4 L9.5 20.5 L0.5 15.4 V5.6 Z" fill="#659ad2"/><path d="M0.5 15.4 L9.5 20.5 L18.5 15.4 L18.5 10.5 L9.5 10.5 Z" fill="#004482"/><path d="M18.5 5.6 V15.4 L9.5 10.5 Z" fill="#00599c"/><circle cx="9.5" cy="10.5" r="5.2" fill="none" stroke="#fff" stroke-width="2.6"/><path d="M9.5 10.5 L19 5.2 V15.8 Z" fill="#00599c"/><path d="M12.6 10.5H15.4M14 9.1V11.9M15.6 10.5H18.2M16.9 9.2V11.8" stroke="#fff" stroke-width="0.7"/></svg></body></html>
